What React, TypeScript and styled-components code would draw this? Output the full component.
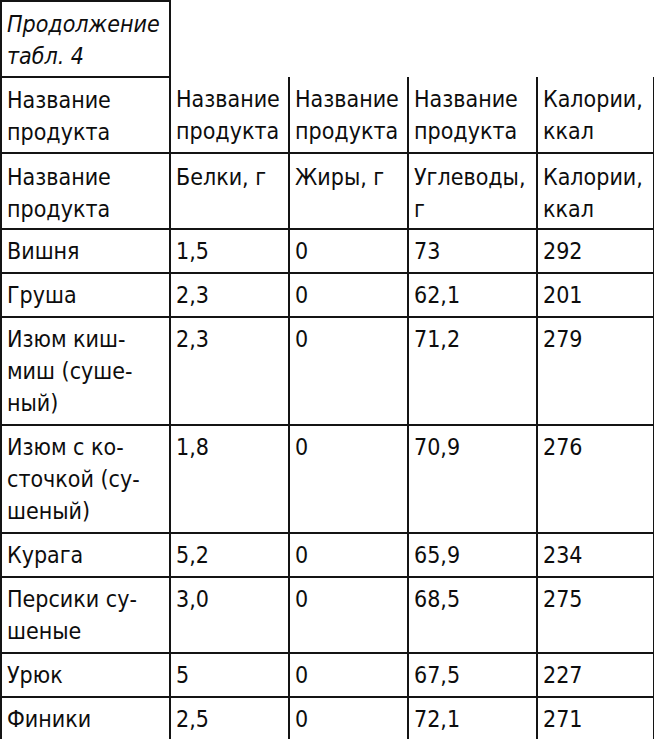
import React from "react";
import styled, { createGlobalStyle } from "styled-components";

const Global = createGlobalStyle`
  html, body { margin: 0; padding: 0; background: #ffffff; }
  body { font-family: "DejaVu Sans", "Liberation Sans", sans-serif; color: #0d0d0d; }
`;

const Table = styled.table`
  border-collapse: collapse;
  table-layout: fixed;
  width: 653px;
  font-family: "DejaVu Sans", "Liberation Sans", sans-serif;
  font-stretch: condensed;
  font-size: 23px;
  line-height: 32px;
  color: #0d0d0d;
`;

const Cell = styled.td<{ $noTop?: boolean; $blank?: boolean; $italic?: boolean; $shift?: number }>`
  border: 2px solid #141414;
  padding: ${(p) => 5 + (p.$shift ?? 0)}px 5px ${(p) => 5 - (p.$shift ?? 0)}px 5px;
  vertical-align: top;
  text-align: left;
  white-space: nowrap;
  font-style: ${(p) => (p.$italic ? "italic" : "normal")};
  ${(p) => (p.$noTop ? "border-top: none;" : "")}
  ${(p) => (p.$blank ? "border: none;" : "")}
`;

const Line = styled.span`
  display: block;
`;

const widths = [169, 119, 119, 129, 117];

type Row = string[][];

const header: Row[] = [
  [["Название", "продукта"], ["Название", "продукта"], ["Название", "продукта"], ["Название", "продукта"], ["Калории,", "ккал"]],
  [["Название", "продукта"], ["Белки, г"], ["Жиры, г"], ["Углеводы,", "г"], ["Калории,", "ккал"]],
];

const headerShift = [1, 2];

const body: Row[] = [
  [["Вишня"], ["1,5"], ["0"], ["73"], ["292"]],
  [["Груша"], ["2,3"], ["0"], ["62,1"], ["201"]],
  [["Изюм киш-", "миш (суше-", "ный)"], ["2,3"], ["0"], ["71,2"], ["279"]],
  [["Изюм с ко-", "сточкой (су-", "шеный)"], ["1,8"], ["0"], ["70,9"], ["276"]],
  [["Курага"], ["5,2"], ["0"], ["65,9"], ["234"]],
  [["Персики су-", "шеные"], ["3,0"], ["0"], ["68,5"], ["275"]],
  [["Урюк"], ["5"], ["0"], ["67,5"], ["227"]],
  [["Финики"], ["2,5"], ["0"], ["72,1"], ["271"]],
];

const Lines = ({ lines }: { lines: string[] }) => (
  <>
    {lines.map((l, i) => (
      <Line key={i}>{l}</Line>
    ))}
  </>
);

export default function App() {
  return (
    <>
      <Global />
      <Table>
        <colgroup>
          {widths.map((w, i) => (
            <col key={i} style={{ width: w }} />
          ))}
        </colgroup>
        <tbody>
          <tr>
            <Cell $italic $shift={1}>
              <Lines lines={["Продолжение", "табл. 4"]} />
            </Cell>
            <Cell $blank />
            <Cell $blank />
            <Cell $blank />
            <Cell $blank />
          </tr>
          {header.map((row, ri) => (
            <tr key={"h" + ri}>
              {row.map((c, ci) => (
                <Cell key={ci} $noTop={ri === 0 && ci > 0} $shift={headerShift[ri]}>
                  <Lines lines={c} />
                </Cell>
              ))}
            </tr>
          ))}
          {body.map((row, ri) => (
            <tr key={"b" + ri}>
              {row.map((c, ci) => (
                <Cell key={ci}>
                  <Lines lines={c} />
                </Cell>
              ))}
            </tr>
          ))}
        </tbody>
      </Table>
    </>
  );
}
